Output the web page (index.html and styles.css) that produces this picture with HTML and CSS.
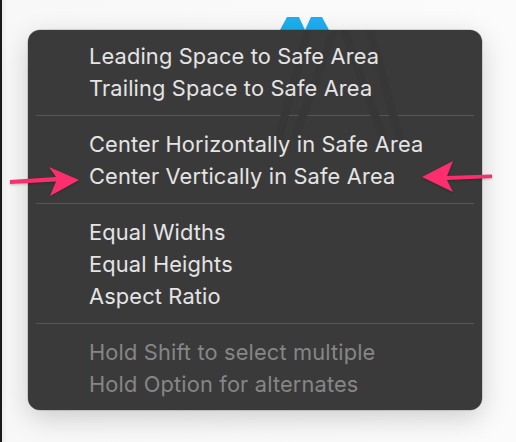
FILE: index.html
```html
<!DOCTYPE html>
<html>
<head>
<meta charset="utf-8">
<link rel="stylesheet" href="styles.css">
</head>
<body>
<div class="stage">
  <svg class="logo" width="60" height="20" viewBox="0 0 60 20">
    <path d="M4 18 L11 5 L23 5 L29 18 Z" fill="#1eaff0"/>
    <path d="M29 18 L35 5 L46 5 L53 18 Z" fill="#1eaff0"/>
  </svg>
  <div class="menu">
    <svg class="ghost" width="130" height="110" viewBox="0 0 130 110">
      <path d="M4 110 L34 0 M60 0 L20 110 M70 0 L110 110 M96 0 L126 110" fill="none" stroke="#373737" stroke-width="8"/>
    </svg>
    <ul class="group">
      <li class="item">Leading Space to Safe Area</li>
      <li class="item">Trailing Space to Safe Area</li>
    </ul>
    <div class="sep"></div>
    <ul class="group">
      <li class="item">Center Horizontally in Safe Area</li>
      <li class="item">Center Vertically in Safe Area</li>
    </ul>
    <div class="sep"></div>
    <ul class="group">
      <li class="item">Equal Widths</li>
      <li class="item">Equal Heights</li>
      <li class="item">Aspect Ratio</li>
    </ul>
    <div class="sep"></div>
    <ul class="group">
      <li class="item disabled">Hold Shift to select multiple</li>
      <li class="item disabled">Hold Option for alternates</li>
    </ul>
  </div>
  <svg class="arrow arrow-left" width="80" height="40" viewBox="0 0 80 40">
    <path d="M8 24 L54 21.5 L48 36 L77 20 L47 7 L54 17 L8 20 Z" fill="#fd2e6e"/>
  </svg>
  <svg class="arrow arrow-right" width="80" height="40" viewBox="0 0 80 40">
    <path d="M70 14.5 L25 16 L31 1 L0 17 L31 32 L25 20 L70 18 Z" fill="#fd2e6e"/>
  </svg>
</div>
</body>
</html>
```

FILE: styles.css
```css
html, body {
  margin: 0;
  padding: 0;
  height: 100%;
}
body {
  background: #fafafa;
  font-family: "Inter", "Liberation Sans", sans-serif;
  overflow: hidden;
}
.stage {
  position: relative;
  height: 442px;
  border-left: 2px solid #1a1a1a;
  box-sizing: border-box;
  padding: 30px 0 0 26px;
  background: linear-gradient(to right, #eeeeee 0, #f8f8f8 6px, #fbfbfb 100%);
}
.logo {
  position: absolute;
  left: 274px;
  top: 12px;
}
.menu {
  position: relative;
  width: 454px;
  height: 380px;
  box-sizing: border-box;
  padding: 10px 8px;
  background: #3a3a3a;
  border-radius: 12px;
  box-shadow: 0 0 0 0.5px rgba(0,0,0,0.25), 0 8px 28px rgba(0,0,0,0.18);
  overflow: hidden;
}
.ghost {
  position: absolute;
  left: 246px;
  top: 0;
}
.group {
  position: relative;
  list-style: none;
  margin: 0;
  padding: 0;
}
.item {
  height: 32px;
  line-height: 32px;
  padding-left: 53px;
  font-size: 21.8px;
  letter-spacing: 0.15px;
  color: #e4e4e4;
  white-space: nowrap;
}
.item.disabled {
  color: #868686;
}
.sep {
  height: 1px;
  margin: 11px 0 12px;
  background: #565656;
}
.arrow {
  position: absolute;
  filter: drop-shadow(0 1px 1px rgba(0,0,0,0.25));
}
.arrow-left {
  left: 0px;
  top: 160px;
}
.arrow-right {
  left: 420px;
  top: 160px;
}
```
